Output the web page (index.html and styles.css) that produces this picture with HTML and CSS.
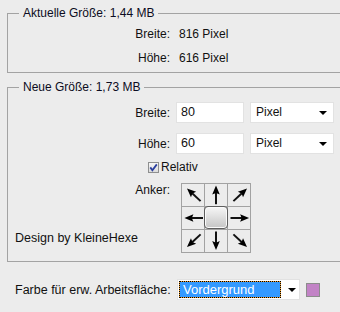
FILE: index.html
```html
<!DOCTYPE html>
<html lang="de">
<head>
<meta charset="utf-8">
<title>Arbeitsfläche</title>
<link rel="stylesheet" href="styles.css">
</head>
<body>
<svg class="defs" width="0" height="0" aria-hidden="true">
  <defs>
    <g id="arr">
      <rect x="-9" y="-1" width="11.5" height="2" fill="#111"/>
      <path d="M9.6 0 L0.6 -3.8 L2.2 0 L0.6 3.8 Z" fill="#000"/>
    </g>
  </defs>
</svg>
<div class="dialog">
  <fieldset class="group g1">
    <legend>Aktuelle Größe: 1,44 MB</legend>
    <div class="info">
      <span class="lbl">Breite:</span><span class="val">816 Pixel</span>
      <span class="lbl">Höhe:</span><span class="val">616 Pixel</span>
    </div>
  </fieldset>

  <fieldset class="group g2">
    <legend>Neue Größe: 1,73 MB</legend>
    <div class="row r1">
      <span class="lbl">Breite:</span>
      <span class="field">80</span>
      <span class="select">Pixel<i class="tri"></i></span>
    </div>
    <div class="row r2">
      <span class="lbl">Höhe:</span>
      <span class="field">60</span>
      <span class="select">Pixel<i class="tri"></i></span>
    </div>
    <div class="check-row">
      <span class="box"><svg viewBox="0 0 11 11" width="11" height="11"><path d="M2.3 5.4 L4.4 8.2 L8.8 2.4" fill="none" stroke="#2b3f9e" stroke-width="1.8"/></svg></span>
      <span class="check-lbl">Relativ</span>
    </div>
    <div class="anchor-row">
      <div class="anchor-left">
        <span class="lbl anker">Anker:</span>
        <span class="credit">Design by KleineHexe</span>
      </div>
      <div class="anchor">
        <span class="cell"><svg viewBox="0 0 22 22"><use href="#arr" transform="translate(12 11) rotate(-137)"/></svg></span>
        <span class="cell"><svg viewBox="0 0 22 22"><use href="#arr" transform="translate(11 11.2) rotate(-90)"/></svg></span>
        <span class="cell"><svg viewBox="0 0 22 22"><use href="#arr" transform="translate(12 11) rotate(-43)"/></svg></span>
        <span class="cell"><svg viewBox="0 0 22 22"><use href="#arr" transform="translate(12 11) rotate(180)"/></svg></span>
        <span class="cell center"><span class="knob"></span></span>
        <span class="cell"><svg viewBox="0 0 22 22"><use href="#arr" transform="translate(11.5 11)"/></svg></span>
        <span class="cell"><svg viewBox="0 0 22 22"><use href="#arr" transform="translate(12 10.5) rotate(137)"/></svg></span>
        <span class="cell"><svg viewBox="0 0 22 22"><use href="#arr" transform="translate(11 10.5) rotate(90)"/></svg></span>
        <span class="cell"><svg viewBox="0 0 22 22"><use href="#arr" transform="translate(12 10.5) rotate(43)"/></svg></span>
      </div>
    </div>
  </fieldset>

  <div class="bottom">
    <span class="blbl">Farbe für erw. Arbeitsfläche:</span>
    <span class="select wide"><span class="hl">Vordergrund</span><i class="tri"></i></span>
    <span class="swatch"></span>
  </div>
</div>
</body>
</html>
```

FILE: styles.css
```css
html, body {
  margin: 0;
  padding: 0;
}
body {
  width: 340px;
  height: 312px;
  overflow: hidden;
  background: #ececec;
  color: #111;
  font-family: "Liberation Sans", Arial, sans-serif;
  font-size: 12px;
}
.defs {
  position: absolute;
  width: 0;
  height: 0;
}
.dialog {
  padding: 6px 0 0 7px;
}
.group {
  margin: 0;
  border: 1px solid #a3a3a3;
  border-right: none;
  padding: 6px 0 6px 6px;
  min-width: 0;
}
.group legend {
  margin-left: 5px;
  padding: 0 4px;
  line-height: 14px;
  color: #0c0c22;
}
.info {
  display: grid;
  grid-template-columns: 156px auto;
  column-gap: 9px;
  row-gap: 8px;
  line-height: 16px;
}
.lbl {
  text-align: right;
}
.g2 {
  margin-top: 7px;
  padding-top: 8px;
  padding-bottom: 8px;
}
.row {
  display: grid;
  grid-template-columns: 156px 68px 84px;
  column-gap: 6px;
  align-items: center;
  height: 21px;
}
.r2 {
  margin-top: 10px;
}
.field {
  height: 19px;
  line-height: 19px;
  background: #fff;
  border: 1px solid #e2e2e2;
  padding-left: 4px;
  font-size: 12.5px;
  box-sizing: content-box;
}
.select {
  position: relative;
  height: 19px;
  line-height: 19px;
  background: #fff;
  border: 1px solid #e2e2e2;
  padding-left: 5px;
  font-size: 12px;
}
.tri {
  position: absolute;
  right: 6px;
  top: 8px;
  width: 0;
  height: 0;
  border-left: 4px solid transparent;
  border-right: 4px solid transparent;
  border-top: 4px solid #000;
}
.check-row {
  display: flex;
  align-items: center;
  margin-top: 6px;
  padding-left: 134px;
  height: 14px;
}
.box {
  width: 11px;
  height: 11px;
  box-sizing: border-box;
  border: 1px solid #8e8f8f;
  background: linear-gradient(#f6f6f6, #dcdcdc);
  display: flex;
  align-items: center;
  justify-content: center;
  overflow: hidden;
}
.box svg {
  display: block;
  flex: none;
}
.check-lbl {
  margin-left: 2px;
  line-height: 14px;
}
.anchor-row {
  display: flex;
  margin-top: 9px;
}
.anchor-left {
  width: 156px;
  display: flex;
  flex-direction: column;
}
.anker {
  line-height: 16px;
  margin-top: -1px;
}
.credit {
  margin-top: 32px;
  margin-left: 1px;
  font-size: 12.5px;
  line-height: 16px;
  color: #111;
}
.anchor {
  margin-left: 11px;
  display: grid;
  grid-template-columns: repeat(3, 22px);
  grid-template-rows: repeat(3, 22px);
  gap: 1px;
  padding: 1px;
  background: #a2a2a2;
}
.cell {
  background: #ececec;
  display: flex;
}
.cell svg {
  width: 22px;
  height: 22px;
  display: block;
}
.center {
  position: relative;
}
.knob {
  margin: -1px;
  width: 24px;
  height: 23px;
  box-sizing: border-box;
  border: 1px solid #5e5e5e;
  border-radius: 4px;
  background: linear-gradient(#f7f7f7, #d9d9d9 60%, #c6c6c6);
  box-shadow: inset 0 0 0 1px #fafafa;
}
.bottom {
  display: flex;
  align-items: center;
  margin-top: 17px;
  padding-left: 8px;
}
.blbl {
  width: 162px;
  line-height: 16px;
  font-size: 12.5px;
}
.wide {
  width: 123px;
  height: 21px;
  box-sizing: border-box;
  padding: 1px;
  line-height: normal;
}
.wide .tri {
  right: 3px;
  top: 8px;
}
.hl {
  display: block;
  width: 102px;
  height: 17px;
  box-sizing: border-box;
  border: 1px dotted #000;
  background: linear-gradient(#3399ff, #3399ff) padding-box, #f0a030 border-box;
  color: #fff;
  font-size: 13px;
  line-height: 15px;
  padding-left: 3px;
}
.swatch {
  margin-left: 6px;
  width: 14px;
  height: 14px;
  box-sizing: border-box;
  border: 1px solid #8c8c8c;
  background: #c283c6;
}
```
